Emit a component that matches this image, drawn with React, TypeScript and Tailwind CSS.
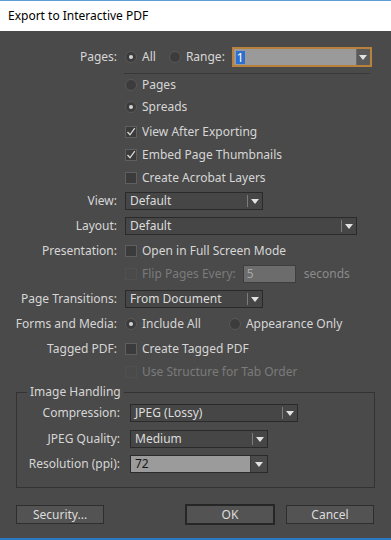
import React from "react";

const FONT = { fontFamily: '"Noto Sans", "Liberation Sans", sans-serif' };

function Arrow({ color = "#e2e2e2" }: { color?: string }) {
  return (
    <svg width="8" height="5" viewBox="0 0 8 5">
      <path d="M0 0 H8 L4 5 Z" fill={color} />
    </svg>
  );
}

function Dropdown({ w, value }: { w: string; value: string }) {
  return (
    <div className={`flex h-[18px] items-center border border-[#2a2a2a] bg-[#464646] ${w}`}>
      <span className="flex-1 pl-[4px] leading-none text-[#dcdcdc]">{value}</span>
      <div className="h-[12px] w-px bg-[#7c7c7c]" />
      <div className="flex w-[14px] items-center justify-center">
        <Arrow />
      </div>
    </div>
  );
}

function Check({ checked, disabled }: { checked?: boolean; disabled?: boolean }) {
  return (
    <div
      className={`flex h-[12px] w-[12px] shrink-0 items-center justify-center border ${
        disabled ? "border-[#505050] bg-[#4a4a4a]" : "border-[#5f5f5f] bg-[#3b3b3b]"
      }`}
    >
      {checked && (
        <svg width="10" height="10" viewBox="0 0 10 10">
          <path d="M1.5 5 L4 7.8 L8.8 1.2" stroke="#d8d8d8" strokeWidth="1.3" fill="none" />
        </svg>
      )}
    </div>
  );
}

function Radio({ on }: { on?: boolean }) {
  return (
    <div className="flex h-[12px] w-[12px] shrink-0 items-center justify-center rounded-full border border-[#585858] bg-[#3c3c3c]">
      {on && <div className="h-[4px] w-[4px] rounded-full bg-[#d4d4d4]" />}
    </div>
  );
}

function Row({
  label,
  mt,
  children,
}: {
  label?: string;
  mt: string;
  children: React.ReactNode;
}) {
  return (
    <div className={`flex h-[22px] items-center ${mt}`}>
      <div className="w-[118px] shrink-0 pr-px text-right">{label}</div>
      <div className="ml-[7px] flex items-center">{children}</div>
    </div>
  );
}

function Btn({ children, w, primary }: { children: React.ReactNode; w: string; primary?: boolean }) {
  return (
    <div
      className={`flex items-center justify-center bg-[#535353] text-[#dcdcdc] ${w} ${
        primary ? "h-[21px] border-2 border-[#262626]" : "h-[19px] border border-[#2e2e2e]"
      }`}
    >
      {children}
    </div>
  );
}

export default function App() {
  return (
    <div className="flex h-[540px] w-[391px] flex-col overflow-hidden text-[12px]" style={FONT}>
      <div className="h-px bg-[#5e9fd8]" />
      <div className="flex h-[30px] items-center bg-white pl-[8px] text-[12px] text-black">
        Export to Interactive PDF
      </div>
      <div className="flex flex-1 flex-col bg-[#4a4a4a] text-[#d6d6d6]">
        <div className="mt-[16px] flex h-[20px] items-center">
          <div className="w-[118px] shrink-0 pr-px text-right">Pages:</div>
          <div className="ml-[7px] flex items-center">
            <Radio on />
            <span className="ml-[5px]">All</span>
            <div className="ml-[13px]">
              <Radio />
            </div>
            <span className="ml-[5px]">Range:</span>
            <div className="ml-[7px] flex h-[20px] w-[140px] items-center border-2 border-[#b9823c] bg-[#9a9a9a]">
              <span className="ml-[2px] bg-[#2d6fd0] px-px leading-[13px] text-white">1</span>
              <div className="flex-1" />
              <div className="flex h-full w-[14px] items-center justify-center border-l border-[#6a6a6a] bg-[#5a5a5a]">
                <Arrow />
              </div>
            </div>
          </div>
        </div>
        <div className="ml-[124px] mt-[6px] h-px w-[246px] bg-[#383838]" />
        <Row mt="mt-0">
          <Radio />
          <span className="ml-[5px]">Pages</span>
        </Row>
        <Row mt="mt-0">
          <Radio on />
          <span className="ml-[5px]">Spreads</span>
        </Row>
        <Row mt="mt-[3px]">
          <Check checked />
          <span className="ml-[5px]">View After Exporting</span>
        </Row>
        <Row mt="mt-px">
          <Check checked />
          <span className="ml-[5px]">Embed Page Thumbnails</span>
        </Row>
        <Row mt="mt-px">
          <Check />
          <span className="ml-[5px]">Create Acrobat Layers</span>
        </Row>
        <Row label="View:" mt="mt-px">
          <Dropdown w="w-[138px]" value="Default" />
        </Row>
        <Row label="Layout:" mt="mt-[3px]">
          <Dropdown w="w-[232px]" value="Default" />
        </Row>
        <Row label="Presentation:" mt="mt-[3px]">
          <Check />
          <span className="ml-[5px]">Open in Full Screen Mode</span>
        </Row>
        <Row mt="mt-px">
          <Check disabled />
          <span className="ml-[5px] text-[#7b7b7b]">Flip Pages Every:</span>
          <div className="ml-[7px] flex h-[18px] w-[53px] items-center border border-[#3e3e3e] bg-[#6c6c6c] pl-[3px] text-[#a8a8a8]">
            5
          </div>
          <span className="ml-[8px] text-[#8a8a8a]">seconds</span>
        </Row>
        <Row label="Page Transitions:" mt="mt-[3px]">
          <Dropdown w="w-[138px]" value="From Document" />
        </Row>
        <Row label="Forms and Media:" mt="mt-[3px]">
          <Radio on />
          <span className="ml-[5px]">Include All</span>
          <div className="ml-[28px]">
            <Radio />
          </div>
          <span className="ml-[5px]">Appearance Only</span>
        </Row>
        <Row label="Tagged PDF:" mt="mt-[3px]">
          <Check />
          <span className="ml-[5px]">Create Tagged PDF</span>
        </Row>
        <Row mt="mt-px">
          <Check disabled />
          <span className="ml-[5px] text-[#7b7b7b]">Use Structure for Tab Order</span>
        </Row>
        <fieldset className="ml-[16px] mt-px w-[359px] border border-[#333333] pb-[13px]">
          <legend className="ml-[10px] px-[3px] leading-[16px]">Image Handling</legend>
          <div className="mt-[3px] flex h-[20px] items-center">
            <div className="w-[103px] shrink-0 text-right">Compression:</div>
            <div className="ml-[10px]">
              <Dropdown w="w-[168px]" value="JPEG (Lossy)" />
            </div>
          </div>
          <div className="mt-[6px] flex h-[20px] items-center">
            <div className="w-[103px] shrink-0 text-right">JPEG Quality:</div>
            <div className="ml-[10px]">
              <Dropdown w="w-[138px]" value="Medium" />
            </div>
          </div>
          <div className="mt-[5px] flex h-[20px] items-center">
            <div className="w-[103px] shrink-0 text-right">Resolution (ppi):</div>
            <div className="ml-[10px] flex h-[18px] w-[138px] items-center border border-[#2a2a2a] bg-[#9b9b9b]">
              <span className="flex-1 pl-[4px] text-[#161616]">72</span>
              <div className="flex h-full w-[17px] items-center justify-center border-l border-[#3a3a3a] bg-[#4a4a4a]">
                <Arrow />
              </div>
            </div>
          </div>
        </fieldset>
        <div className="mt-[16px] flex items-center">
          <div className="ml-[16px]">
            <Btn w="w-[88px]">Security...</Btn>
          </div>
          <div className="ml-[81px]">
            <Btn w="w-[90px]" primary>
              OK
            </Btn>
          </div>
          <div className="ml-[11px]">
            <Btn w="w-[88px]">Cancel</Btn>
          </div>
        </div>
      </div>
      <div className="h-[2px] bg-[#2a7bc4]" />
    </div>
  );
}
